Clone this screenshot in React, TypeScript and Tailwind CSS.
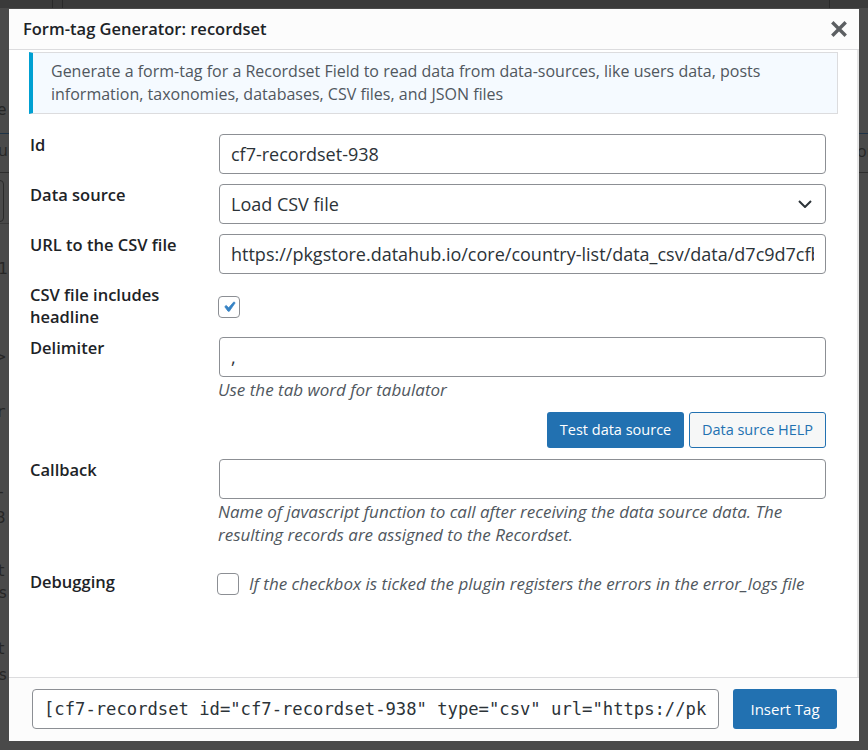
import { ReactNode } from "react";

const sans = "font-['Open_Sans','Noto_Sans',sans-serif]";

const Row = ({ label, children, className = "" }: { label: ReactNode; children: ReactNode; className?: string }) => (
  <div className={`flex ${className}`}>
    <div className="w-[189px] shrink-0 pr-3 text-[16.5px] leading-[22px] font-semibold text-[#1d2327]">{label}</div>
    <div className="min-w-0 flex-1">{children}</div>
  </div>
);

const TextInput = ({ value }: { value: string }) => (
  <input
    readOnly
    value={value}
    className="h-[40px] w-full rounded-[4px] border border-[#8c8f94] bg-white px-[11px] text-[18px] text-[#2c3338] outline-none"
  />
);

const Help = ({ children }: { children: ReactNode }) => (
  <p className="-ml-px text-[17px] leading-[23px] italic text-[#50575e]">{children}</p>
);

const CheckBox = ({ checked }: { checked?: boolean }) => (
  <span className="flex h-[22px] w-[22px] items-center justify-center rounded-[4px] border border-[#8c8f94] bg-white">
    {checked && (
      <svg viewBox="0 0 20 20" className="h-[20px] w-[20px]">
        <path d="M14.83 4.89l1.34.94-5.81 8.38H9.02L5.78 9.67l1.34-1.25 2.57 2.4z" fill="#3582c4" stroke="#3582c4" strokeWidth="0.8" />
      </svg>
    )}
  </span>
);

// bits of the admin page showing around the thickbox overlay
const Backdrop = () => (
  <>
    <div className="absolute inset-x-0 top-0 flex h-[8px] bg-[#3a3a3a]">
      <div className="ml-[52px] h-full w-px bg-[#2a2a2a]" />
      <div className="ml-[9px] h-full w-px bg-[#2a2a2a]" />
      <div className="ml-[766px] h-full w-px bg-[#2a2a2a]" />
    </div>
    <div className="absolute left-0 top-[100px] w-[9px] overflow-hidden font-['DejaVu_Sans_Mono',monospace] text-[16px] leading-[20px] text-[#262626]">
      <div className="-ml-[3px]">e</div>
    </div>
    <div className="absolute left-0 top-[133px] h-px w-[9px] bg-[#1e3346]" />
    <div className="absolute left-0 top-[140px] w-[9px] overflow-hidden text-[16px] leading-[20px] text-[#262626]">
      <div className="-ml-[2px]">u</div>
    </div>
    <div className="absolute left-0 top-[172px] h-px w-[9px] bg-[#2e2e2e]" />
    <div className="absolute -left-[6px] top-[180px] h-[42px] w-[10px] rounded-[4px] border border-[#2a2a2a]" />
    <div className="absolute left-0 top-[223px] h-px w-[9px] bg-[#3a3a3a]" />
    <div className="absolute left-0 top-[259px] w-[9px] overflow-hidden font-['DejaVu_Sans_Mono',monospace] text-[16px] leading-[20px] text-[#262626]">
      <div className="-ml-[2px]">1</div>
      <div className="mt-[68px] -ml-[4px]">&gt;</div>
      <div className="mt-[35px] -ml-[4px]">r</div>
      <div className="mt-[60px] -ml-[4px]">-</div>
      <div className="mt-[6px] -ml-[4px]">3</div>
      <div className="mt-[33px] -ml-[4px]">t</div>
      <div className="mt-[2px] -ml-[2px]">s</div>
      <div className="mt-[36px] -ml-[4px]">t</div>
      <div className="mt-[6px] -ml-[2px]">s</div>
    </div>
    <div className="absolute left-[859px] top-[133px] h-px w-[9px] bg-[#1e3346]" />
    <div className="absolute left-[859px] top-[141px] w-[9px] overflow-hidden text-[16px] leading-[20px] text-[#262626]">
      <div className="-ml-[2px]">or</div>
    </div>
    <div className="absolute left-[859px] top-[172px] h-px w-[9px] bg-[#2e2e2e]" />
  </>
);

export default function App() {
  return (
    <div className={`relative h-[750px] w-[868px] overflow-hidden bg-[#4a4a4a] ${sans}`}>
      <Backdrop />

      <div className="absolute left-[9px] top-[9px] flex h-[732px] w-[850px] flex-col bg-white">
        {/* title bar */}
        <div className="flex h-[41px] shrink-0 items-center justify-between border-b border-[#dcdcde] bg-[#fcfcfc] pl-[14px] pr-[10px]">
          <h2 className="text-[16.5px] font-semibold text-[#1d2327]">Form-tag Generator: recordset</h2>
          <svg viewBox="0 0 20 20" className="h-[20px] w-[20px]">
            <path d="M4.5 4.5l11 11M15.5 4.5l-11 11" stroke="#5c5f62" strokeWidth="3.4" strokeLinecap="square" />
          </svg>
        </div>

        <div className="flex-1 overflow-hidden border-r-2 border-[#e6e6e6]">
          <div className="ml-[20px] mr-[19px] mt-[2px] border border-l-4 border-[#dcdcde] border-l-[#00a0d2] bg-[#f5faff] py-[7px] pl-[18px] pr-3 text-[16px] leading-[23px] text-[#50575e]">
            Generate a form-tag for a Recordset Field to read data from data-sources, like users data, posts information,
            taxonomies, databases, CSV files, and JSON files
          </div>

          <div className="mt-[20px] pl-[21px] pr-[31px]">
            <Row label="Id">
              <TextInput value="cf7-recordset-938" />
            </Row>

            <Row label="Data source" className="mt-[10px]">
              <div className="flex h-[40px] w-full items-center justify-between rounded-[4px] border border-[#8c8f94] bg-white pl-[11px] pr-[13px] text-[18px] text-[#2c3338]">
                <span>Load CSV file</span>
                <svg viewBox="0 0 14 8" className="h-[8px] w-[14px]">
                  <path d="M1 1l6 6 6-6" fill="none" stroke="#2c3338" strokeWidth="2" />
                </svg>
              </div>
            </Row>

            <Row label="URL to the CSV file" className="mt-[10px]">
              <TextInput value="https://pkgstore.datahub.io/core/country-list/data_csv/data/d7c9d7cfb42cb69f4422dec222dbbaa8/data_csv.csv" />
            </Row>

            <Row label={<>CSV file includes<br />headline</>} className="mt-[10px]">
              <div className="mt-[12px] -ml-px">
                <CheckBox checked />
              </div>
            </Row>

            <Row label="Delimiter" className="mt-[9px]">
              <TextInput value="," />
              <div className="mt-[1px]">
                <Help>Use the tab word for tabulator</Help>
              </div>
              <div className="mt-[11px] flex justify-end gap-[5px]">
                <button className="h-[36px] w-[137px] rounded-[3px] bg-[#2271b1] text-[14.5px] text-white">Test data source</button>
                <button className="h-[36px] w-[137px] rounded-[3px] border border-[#2271b1] bg-[#f6f7f7] text-[14.5px] text-[#2271b1]">
                  Data surce HELP
                </button>
              </div>
            </Row>

            <Row label="Callback" className="mt-[11px]">
              <TextInput value="" />
              <div className="mt-[1px]">
                <Help>
                  Name of javascript function to call after receiving the data source data. The resulting records are assigned
                  to the Recordset.
                </Help>
              </div>
            </Row>

            <Row label="Debugging" className="mt-[25px]">
              <div className="-ml-[2px] mt-[2px] flex items-center gap-[10px]">
                <CheckBox />
                <span className="text-[17px] leading-[22px] italic text-[#50575e]">
                  If the checkbox is ticked the plugin registers the errors in the error_logs file
                </span>
              </div>
            </Row>
          </div>
        </div>

        {/* footer with the generated tag */}
        <div className="flex h-[64px] shrink-0 items-start gap-[14px] border-t border-[#dcdcde] bg-[#fcfcfc] pl-[23px] pr-[22px] pt-[11px]">
          <input
            readOnly
            value={'[cf7-recordset id="cf7-recordset-938" type="csv" url="https://pkgstore.datahub.io/core/country-list/data_csv/data/d7c9d7cfb42cb69f4422dec222dbbaa8/data_csv.csv" headline="1" delimiter=","]'}
            className="h-[40px] w-[687px] rounded-[4px] border border-[#8c8f94] bg-white px-[11px] font-['DejaVu_Sans_Mono',monospace] text-[17.2px] text-[#2c3338] outline-none"
          />
          <button className="h-[40px] w-[104px] rounded-[3px] bg-[#2271b1] text-[15px] text-white">Insert Tag</button>
        </div>
      </div>
    </div>
  );
}
